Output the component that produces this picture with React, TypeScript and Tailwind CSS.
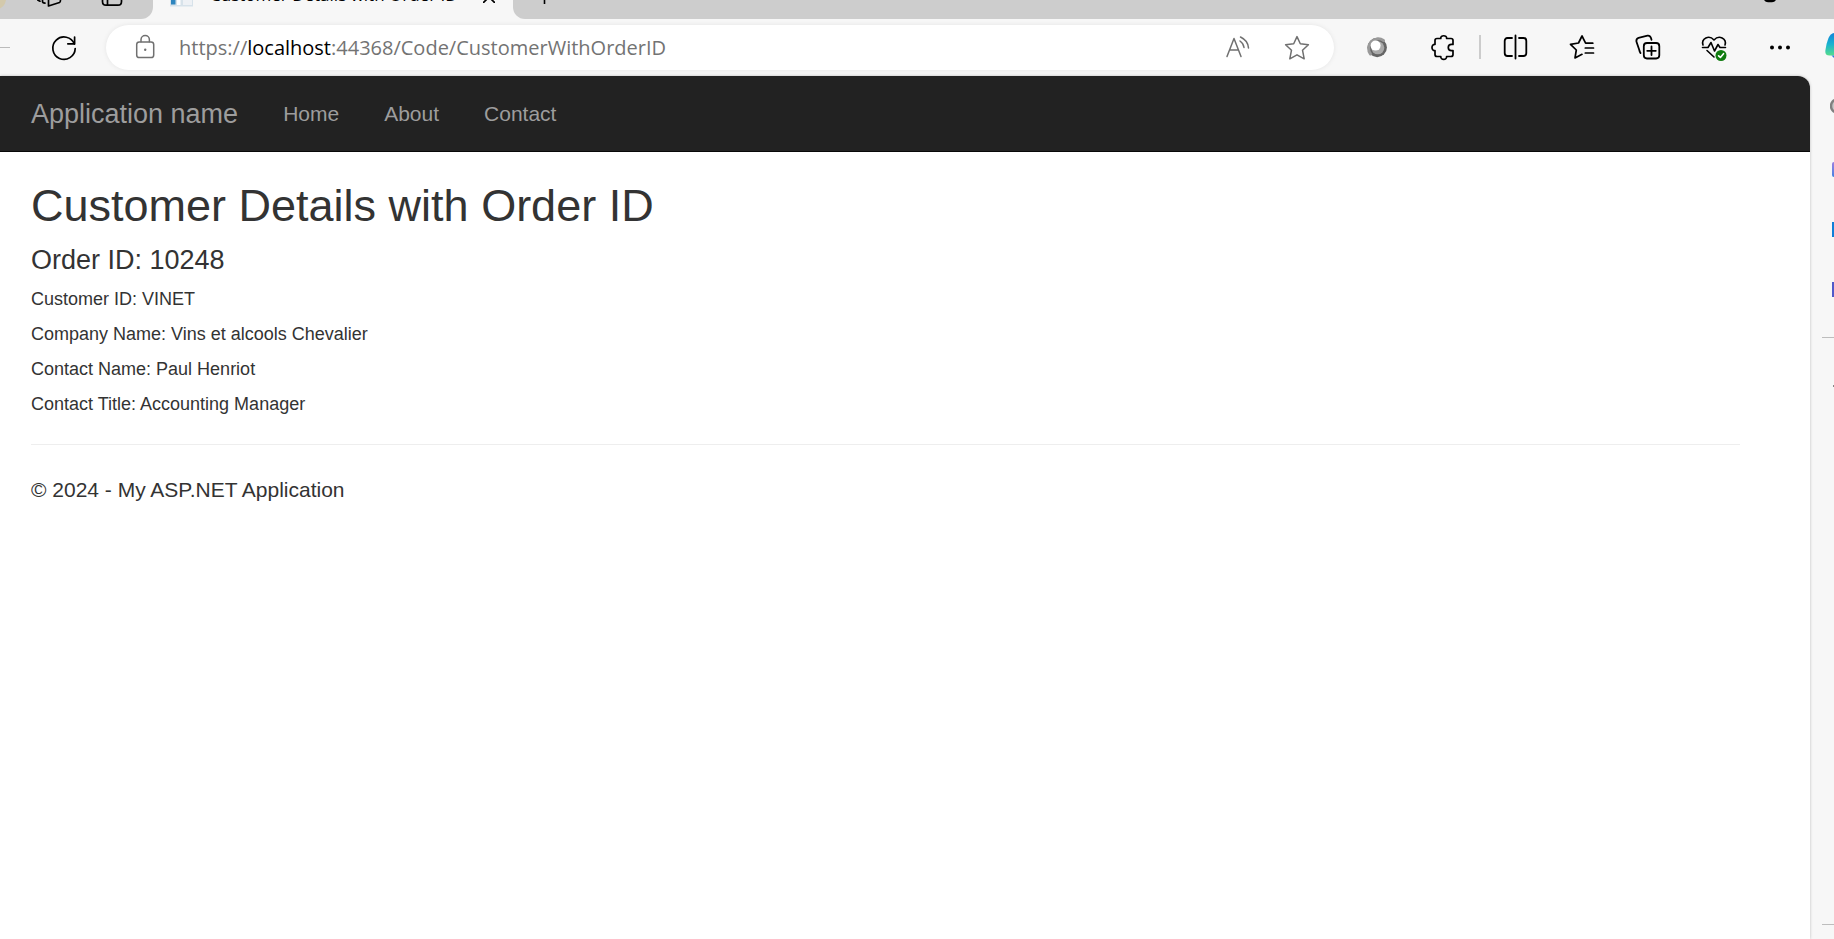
import React from "react";

type IconProps = { children: React.ReactNode; size?: string; box?: string; width?: number };

function Glyph({ children, size = "size-7", box = "0 0 28 28", width = 1.5 }: IconProps) {
  return (
    <svg className={`${size} shrink-0`} viewBox={box} fill="none" stroke="currentColor" strokeWidth={width} strokeLinecap="round" strokeLinejoin="round" aria-hidden="true">
      {children}
    </svg>
  );
}

const starPath = "M14 2.6 L17.3 9.7 L25.4 10.7 L19.5 16.2 L21.2 24.8 L14 20.8 L6.8 24.8 L8.5 16.2 L2.6 10.7 L10.7 9.7 Z";

function TabStrip() {
  return (
    <div className="flex h-[19px] overflow-hidden bg-[#f7f7f7]">
      <div className="flex h-full w-[153px] items-end overflow-hidden rounded-br-xl bg-[#cdcdcd]">
        <svg className="h-[19px] w-[153px]" viewBox="0 0 153 19" fill="none" aria-hidden="true">
          <path d="M0 8.5 C3 7 5.500 4 6 0 H0 Z" fill="#d3c9ab" />
          <path d="M38 0.300 L40 1.200 M42.500 0 V1.500 Q42.500 3 45 3.200 M48.500 0 V6 L59.500 2.500 Q60.500 2 60.500 0" stroke="#000" strokeWidth="1.700" strokeLinejoin="round" strokeLinecap="round" />
          <path d="M102.500 0 V1.500 Q102.500 5.200 106 5.200 H118 Q121.500 5.200 121.500 1.500 V0 M107.500 0 V5" stroke="#000" strokeWidth="1.700" />
        </svg>
      </div>
      <div className="flex h-full w-[360px] items-end pl-[17px] pr-[18px]">
        <svg className="mb-3 h-[7px] w-6 shrink-0" viewBox="0 0 24 7" aria-hidden="true">
          <path d="M0 0 H23 V6.500 H0 Z" fill="#d7e2ea" />
          <path d="M1 0 H5.500 V4.500 H1 Z" fill="#2f86bf" />
          <path d="M7 0 H10.500 V5 H7 Z" fill="#fff" />
          <path d="M13 0 H22 V5 H13 Z" fill="#eef1f5" />
        </svg>
        <span className="mb-3 ml-4 whitespace-nowrap font-['Open_Sans',sans-serif] text-[17px] leading-6 text-black">
          Customer Details with Order ID
        </span>
        <button aria-label="Close tab" className="mb-4 ml-auto">
          <svg className="size-3" viewBox="0 0 12 12" aria-hidden="true">
            <path d="M0 0 L12 12 M12 0 L0 12" stroke="#000" strokeWidth="1.700" />
          </svg>
        </button>
      </div>
      <div className="flex h-full flex-1 items-start rounded-bl-xl bg-[#cdcdcd]">
        <svg className="h-[6px] w-16" viewBox="0 0 64 6" aria-hidden="true">
          <path d="M31.500 0 V4" stroke="#000" strokeWidth="1.600" />
        </svg>
        <svg className="ml-auto mr-[58px] h-[3px] w-3" viewBox="0 0 12 3" aria-hidden="true">
          <path d="M0 0 H12 Q10.500 2.300 8 2.300 H4 Q1.500 2.300 0 0" fill="#000" />
        </svg>
      </div>
    </div>
  );
}

function Toolbar() {
  return (
    <div className="flex h-[57px] items-center bg-[#f7f7f7] text-black">
      <div className="h-px w-[10px] bg-[#bbbbbb]" />
      <button aria-label="Refresh" className="ml-10">
        <Glyph width={1.7}>
          <path d="M24.400 10 A11.200 11.200 0 1 0 25.200 14.500" />
          <path d="M24.600 3 V9.800 H17.800" />
        </Glyph>
      </button>
      <div className="ml-7 flex h-[45px] min-w-0 flex-1 items-center rounded-full bg-white pl-[25px] pr-[23px] text-[#707070] shadow-[0_0_5px_rgba(0,0,0,0.08)]">
        <Glyph>
          <rect x="5.700" y="8" width="17" height="15.600" rx="2.600" />
          <path d="M10 7.800 V5.800 A4.200 4.200 0 0 1 18.400 5.800 V7.800" />
          <circle cx="14.200" cy="15.800" r="1.200" fill="currentColor" stroke="none" />
        </Glyph>
        <div
          role="textbox"
          aria-label="Address"
          contentEditable
          suppressContentEditableWarning
          spellCheck={false}
          className="ml-5 flex-1 whitespace-nowrap font-['Open_Sans',sans-serif] text-[20px] leading-7 text-[#737373] outline-none"
        >
          https://<span className="text-black">localhost</span>:44368/Code/CustomerWithOrderID
        </div>
        <button aria-label="Read aloud" className="mr-8">
          <Glyph>
            <path d="M4 22.500 L11 4.500 L18 22.500 M6.500 16 H15.500" />
            <path d="M17 7 Q20.500 9.500 21 13.500 M17.500 3 Q25 6.500 25.500 14" />
          </Glyph>
        </button>
        <button aria-label="Add to favorites">
          <Glyph><path d={starPath} /></Glyph>
        </button>
      </div>
      <div className="ml-[29px] flex items-center pb-px">
        <button aria-label="Extension">
          <Glyph>
            <circle cx="14.200" cy="14.500" r="9.700" fill="#666" stroke="none" />
            <path d="M7.500 21 A9.500 9.500 0 0 1 20.500 7.500" stroke="#999" strokeWidth="3" />
            <circle cx="14.800" cy="14.800" r="6.500" fill="#aaa" stroke="none" />
            <circle cx="12.600" cy="12.600" r="5" fill="#fff" stroke="none" />
          </Glyph>
        </button>
        <button aria-label="Extensions" className="ml-[38px]">
          <Glyph width={1.7}>
            <path d="M8 5.500 H11.800 C11.200 1.800 18.200 1.800 17.600 5.500 H22 Q24 5.500 24 7.500 V11.400 H22.500 C18.200 11.400 18.200 17.600 22.500 17.600 H24 V21.500 Q24 23.500 22 23.500 H17.600 C18.200 27.200 11.200 27.200 11.800 23.500 H8 Q6 23.500 6 21.500 V17.600 C2 18 2 11 6 11.400 V7.500 Q6 5.500 8 5.500 Z" />
          </Glyph>
        </button>
        <div className="ml-[22px] h-6 w-[2px] bg-[#cccccc]" />
        <button aria-label="Split screen" className="ml-[20px]">
          <Glyph width={1.8}>
            <path d="M14.500 2.500 V25.500 M11 5 H6.500 Q3.700 5 3.700 8 V20 Q3.700 23 6.500 23 H11 M18 5 H22.500 Q25.300 5 25.300 8 V20 Q25.300 23 22.500 23 H18" />
          </Glyph>
        </button>
        <button aria-label="Favorites" className="ml-[39px]">
          <Glyph width={1.7}>
            <path d="M24.800 10.200 H17.600 L14 3 L10.500 10 L2.500 11.300 L8.300 17 L7 25 L14 21.300 M17.300 15 H25.500 M17.300 20 H25.500" />
          </Glyph>
        </button>
        <button aria-label="Collections" className="ml-[38px]">
          <Glyph width={1.8}>
            <rect x="9.800" y="10" width="15.500" height="15.500" rx="3.200" />
            <path d="M17.500 13.500 V22 M13.200 17.800 H21.800 M6.500 20 Q5.700 19.200 5.300 17 L2.400 8.500 Q2 5.500 4.500 4.800 L13.500 2.600 Q16 2.200 17 5 L17.500 6.800" />
          </Glyph>
        </button>
        <button aria-label="Browser essentials" className="ml-[38px]">
          <Glyph width={1.6}>
            <path d="M3 12 C1 5.500 9 1.500 14 7 C19 1.500 27 5.500 25 12 M2.500 14.500 H8 L11 9.500 L14.500 18 L18 11.500 L20 14.500 H25.500 M7 17.500 L14 24" />
            <circle cx="21" cy="22.500" r="5.500" fill="#107c10" stroke="none" />
            <path d="M18.600 22.800 L20.400 24.400 L23.500 20.700" stroke="#fff" />
          </Glyph>
        </button>
        <button aria-label="Settings and more" className="ml-[38px]">
          <Glyph>
            <g fill="currentColor" stroke="none">
              <circle cx="6" cy="14.500" r="2" />
              <circle cx="14" cy="14.500" r="2" />
              <circle cx="22" cy="14.500" r="2" />
            </g>
          </Glyph>
        </button>
        <button aria-label="Copilot" className="ml-[31px]">
          <svg className="h-7 w-[9px]" viewBox="0 0 9 28" aria-hidden="true">
            <defs>
              <linearGradient id="copilot" x1="0" y1="0" x2="0" y2="1">
                <stop offset="0" stopColor="#1184d8" />
                <stop offset="0.500" stopColor="#19b3d0" />
                <stop offset="1" stopColor="#55dc8c" />
              </linearGradient>
            </defs>
            <path d="M9 0 Q5.500 0.500 3.500 5 Q1 11 0.300 18 Q0 22.500 4.500 22.500 H9 Z" fill="url(#copilot)" />
            <path d="M6.500 22.500 H9 V25 Z" fill="#2b7de0" />
          </svg>
        </button>
      </div>
    </div>
  );
}

function Sidebar() {
  return (
    <aside className="flex w-6 flex-col items-end bg-[#f7f7f7] pt-[22px]">
      <svg className="h-4 w-1" viewBox="0 0 4 16" aria-hidden="true">
        <path d="M6 2 A5 6 0 0 0 6 14" fill="#c8c8c8" stroke="#808080" strokeWidth="2.500" />
      </svg>
      <div className="mt-[48px] h-[15px] w-[2px] rounded-l-sm bg-linear-to-b from-[#9a7fe0] to-[#3b82e0]" />
      <div className="mt-[45px] h-[15px] w-[2px] bg-[#0f7fd8]" />
      <div className="mt-[45px] h-[15px] w-[2px] bg-[#5059c9]" />
      <div className="mt-[40px] h-px w-3 bg-[#bdbdbd]" />
      <div className="mt-[47px] h-[2px] w-px bg-[#888888]" />
      <div className="mb-[14px] mt-auto h-px w-3 bg-[#bdbdbd]" />
    </aside>
  );
}

const links = ["Home", "About", "Contact"];

const details = [
  ["Customer ID", "VINET"],
  ["Company Name", "Vins et alcools Chevalier"],
  ["Contact Name", "Paul Henriot"],
  ["Contact Title", "Accounting Manager"],
];

export default function App() {
  return (
    <div className="flex min-h-screen flex-col overflow-hidden bg-[#f7f7f7] font-['Liberation_Sans',Arial,sans-serif]">
      <TabStrip />
      <Toolbar />
      <div className="flex flex-1">
        <div className="z-10 flex-1 overflow-hidden rounded-tr-xl bg-white text-[#333333] shadow-[0_0_3px_rgba(0,0,0,0.25)]">
          <nav className="flex h-[76px] items-center border-b border-[#080808] bg-[#222222] pl-[31px] text-[#9d9d9d]">
            <a href="#" className="text-[27px] leading-[30px]">Application name</a>
            <div className="ml-[45px] flex gap-[45px] text-[21px] leading-[30px]">
              {links.map((l) => (
                <a key={l} href="#">{l}</a>
              ))}
            </div>
          </nav>
          <main className="pl-[31px] pr-[70px] pt-[29px]">
            <h1 className="text-[45px] leading-[50px]">Customer Details with Order ID</h1>
            <h2 className="mt-[14px] text-[27px] leading-[30px]">Order ID: 10248</h2>
            <div className="mt-[14px] flex flex-col gap-[15px] text-[18px] leading-5">
              {details.map(([k, v]) => (
                <p key={k}>{k}: {v}</p>
              ))}
            </div>
            <hr className="mt-[30px] border-[#eeeeee]" />
            <footer className="mt-[30px] text-[21px] leading-[30px]">© 2024 - My ASP.NET Application</footer>
          </main>
        </div>
        <Sidebar />
      </div>
    </div>
  );
}
